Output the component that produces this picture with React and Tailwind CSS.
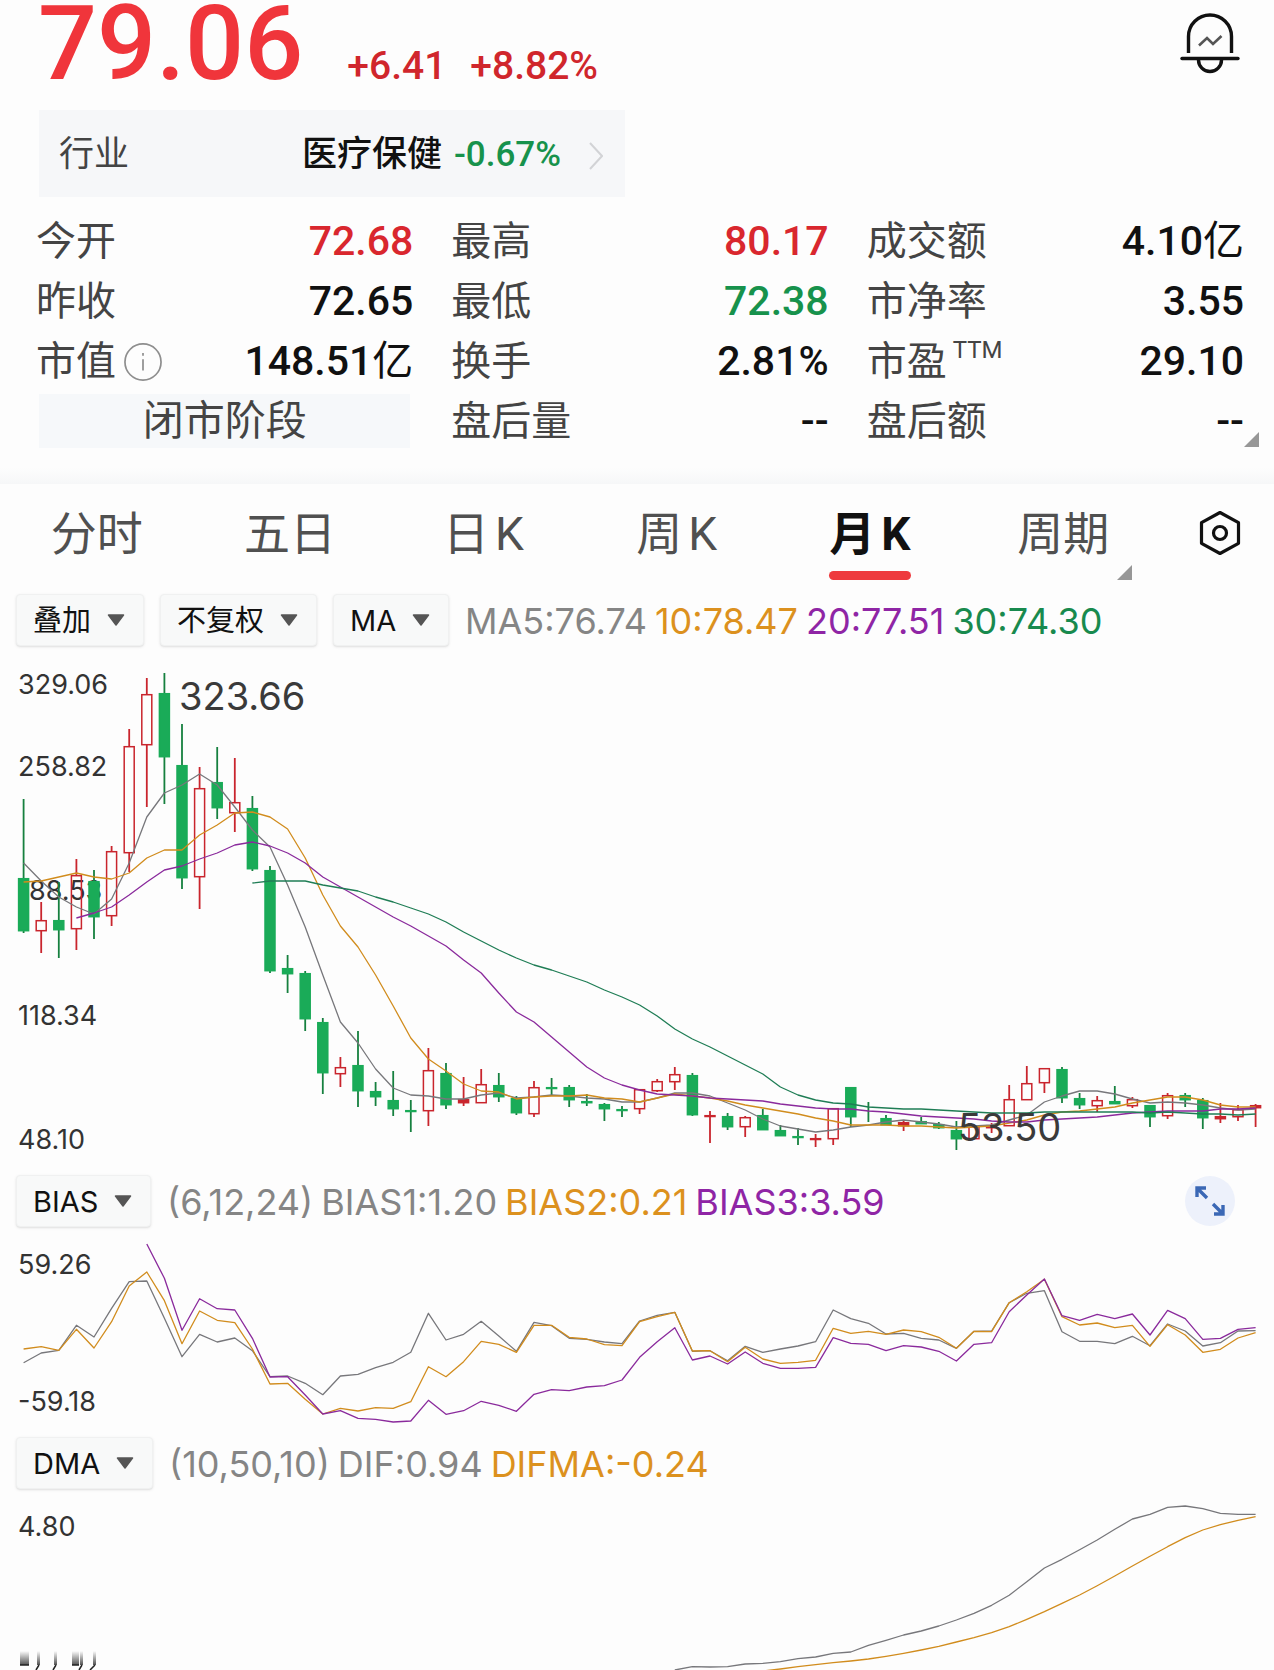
const RED = '#c9252d'
const GREEN = '#1aab58'
const GRAY = '#77777b'
const ORANGE = '#d18c1d'
const PURPLE = '#8a2a9c'
const DARK_GREEN = '#1f7d55'

const stats = [
  { label: '今开', value: '72.68', tone: 'text-[#d9272e]' },
  { label: '最高', value: '80.17', tone: 'text-[#d9272e]' },
  { label: '成交额', value: '4.10', unit: '亿', tone: 'text-[#111111]' },
  { label: '昨收', value: '72.65', tone: 'text-[#111111]' },
  { label: '最低', value: '72.38', tone: 'text-[#17924c]' },
  { label: '市净率', value: '3.55', tone: 'text-[#111111]' },
  { label: '市值', value: '148.51', unit: '亿', tone: 'text-[#111111]', info: true },
  { label: '换手', value: '2.81%', tone: 'text-[#111111]' },
  { label: '市盈', value: '29.10', tone: 'text-[#111111]', sup: 'TTM' },
]

const tabs = [
  { name: '分时' },
  { name: '五日' },
  { name: '日', suffix: 'K' },
  { name: '周', suffix: 'K' },
  { name: '月', suffix: 'K', active: true },
  { name: '周期', more: true },
]

// [high, body top, body bottom, low, up]
const candles = [
  [799, 878, 931, 933, 0], [902, 920, 931, 953, 1], [882, 920, 930, 958, 0], [859, 875, 929, 950, 1],
  [870, 881, 917, 939, 0], [846, 851, 916, 926, 1], [729, 746, 853, 872, 1], [678, 694, 745, 807, 1],
  [673, 693, 757, 804, 0], [724, 765, 878, 889, 0], [767, 788, 877, 909, 1], [747, 782, 808, 819, 0],
  [758, 802, 813, 832, 1], [796, 808, 869, 871, 0], [866, 870, 971, 973, 0], [955, 968, 974, 993, 0],
  [971, 973, 1019, 1031, 0], [1018, 1022, 1073, 1094, 0], [1057, 1067, 1074, 1087, 1], [1031, 1065, 1091, 1107, 0],
  [1082, 1091, 1097, 1106, 0], [1071, 1100, 1109, 1116, 0], [1100, 1110, 1111, 1132, 0], [1048, 1070, 1111, 1126, 1],
  [1063, 1073, 1105, 1109, 0], [1077, 1099, 1103, 1106, 1], [1069, 1084, 1103, 1103, 1], [1073, 1085, 1097, 1102, 0],
  [1096, 1098, 1113, 1115, 0], [1081, 1087, 1114, 1117, 1], [1078, 1087, 1088, 1095, 0], [1085, 1087, 1100, 1107, 0],
  [1094, 1101, 1103, 1106, 0], [1103, 1104, 1109, 1121, 0], [1106, 1109, 1110, 1117, 0], [1089, 1089, 1109, 1114, 1],
  [1079, 1081, 1091, 1092, 1], [1067, 1074, 1082, 1090, 1], [1073, 1075, 1115, 1116, 0], [1111, 1115, 1116, 1143, 1],
  [1113, 1116, 1127, 1130, 0], [1116, 1117, 1127, 1137, 1], [1109, 1115, 1130, 1130, 0], [1125, 1130, 1136, 1136, 0],
  [1128, 1136, 1137, 1145, 0], [1134, 1138, 1139, 1147, 1], [1108, 1108, 1139, 1145, 1], [1087, 1087, 1117, 1127, 0],
  [1102, 1111, 1111, 1122, 0], [1115, 1118, 1125, 1125, 0], [1120, 1122, 1126, 1131, 1], [1117, 1121, 1124, 1124, 0],
  [1122, 1124, 1128, 1129, 0], [1121, 1130, 1139, 1150, 0], [1126, 1126, 1139, 1139, 1], [1123, 1125, 1128, 1133, 1],
  [1085, 1099, 1126, 1126, 1], [1066, 1083, 1100, 1100, 1], [1068, 1068, 1083, 1093, 1], [1067, 1069, 1098, 1103, 0],
  [1093, 1098, 1105, 1109, 0], [1096, 1100, 1106, 1112, 1], [1086, 1101, 1104, 1104, 0], [1097, 1099, 1106, 1108, 1],
  [1105, 1105, 1117, 1127, 0], [1093, 1095, 1116, 1119, 1], [1093, 1095, 1100, 1107, 0], [1098, 1100, 1118, 1129, 0],
  [1103, 1116, 1119, 1123, 1], [1105, 1109, 1117, 1121, 1], [1104, 1105, 1108, 1127, 1],
]

const ma5 = [
  863, 881, 897, 907, 914, 899, 863, 817, 793, 785, 774, 785, 807, 830, 847, 885, 927, 975, 1022, 1043, 1069, 1088, 1095,
  1096, 1099, 1099, 1095, 1093, 1098, 1097, 1095, 1096, 1098, 1099, 1102, 1102, 1098, 1093, 1093, 1096, 1103, 1110, 1119,
  1126, 1129, 1132, 1130, 1127, 1125, 1122, 1120, 1122, 1124, 1127, 1126, 1125, 1120, 1115, 1102, 1096, 1091, 1091, 1094,
  1099, 1103, 1102, 1103, 1105, 1108, 1110, 1109,
]
const ma10 = [
  882, 881, 877, 873, 877, 879, 873, 858, 850, 850, 835, 825, 813, 812, 817, 829, 858, 895, 926, 947, 975, 1006, 1038,
  1059, 1071, 1084, 1091, 1092, 1099, 1097, 1096, 1096, 1095, 1098, 1099, 1102, 1098, 1094, 1096, 1098, 1101, 1105, 1108,
  1111, 1114, 1118, 1121, 1125, 1125, 1125, 1126, 1126, 1127, 1128, 1127, 1126, 1123, 1120, 1115, 1112, 1111, 1109, 1107,
  1103, 1100, 1097, 1097, 1100, 1105, 1107, 1107,
]
const ma20 = [
  918, 913, 907, 895, 882, 870, 866, 859, 853, 845, 842, 846, 853, 863, 877, 887, 897, 907, 917, 926, 936, 946, 960, 973,
  993, 1012, 1022, 1037, 1052, 1067, 1078, 1085, 1090, 1094, 1095, 1096, 1098, 1099, 1100, 1101, 1104, 1106, 1108, 1109,
  1109, 1111, 1112, 1114, 1116, 1117, 1118, 1119, 1121, 1122, 1122, 1120, 1119, 1118, 1117, 1115, 1113, 1112, 1111, 1111,
  1111, 1109, 1109, 1108,
]
const ma30 = [
  883, 881, 881, 881, 885, 888, 891, 897, 902, 908, 914, 922, 932, 941, 950, 958, 965, 970, 976, 982, 990, 997, 1005,
  1016, 1029, 1039, 1047, 1056, 1065, 1074, 1087, 1095, 1100, 1103, 1104, 1107, 1108, 1109, 1109, 1110, 1111, 1112, 1113,
  1113, 1113, 1112, 1112, 1112, 1112, 1112, 1112, 1113, 1112, 1113, 1114, 1114, 1115, 1114,
]

const bias1 = [
  398, 369, 361, 286, 321, 235, 155, 153, 265, 380, 313, 336, 324, 362, 440, 438, 460, 494, 438, 433, 413, 397, 367, 250,
  330, 313, 274, 318, 364, 277, 287, 325, 328, 336, 341, 273, 256, 247, 364, 362, 392, 349, 367, 357, 348, 335, 240, 266,
  280, 312, 310, 325, 330, 355, 304, 303, 218, 190, 182, 305, 334, 334, 341, 319, 347, 282, 303, 348, 338, 303, 302,
]
const bias2 = [
  357, 350, 361, 298, 354, 275, 168, 126, 212, 341, 243, 271, 278, 357, 462, 460, 508, 552, 535, 543, 533, 535, 515, 410,
  440, 395, 334, 343, 367, 286, 286, 322, 327, 344, 347, 275, 260, 247, 363, 362, 395, 352, 387, 400, 397, 391, 295, 310,
  304, 313, 300, 305, 322, 355, 304, 305, 218, 185, 148, 260, 285, 279, 293, 286, 349, 284, 315, 367, 358, 324, 308,
]
const bias3 = [
  42, 145, 301, 206, 236, 240, 325, 441, 440, 495, 552, 542, 565, 568, 576, 573, 511, 553, 542, 514, 526, 544, 493, 479,
  482, 471, 467, 450, 382, 335, 293, 390, 378, 402, 366, 400, 415, 415, 412, 323, 340, 343, 362, 347, 351, 364, 393, 343,
  338, 245, 195, 147, 257, 271, 253, 266, 252, 315, 241, 266, 328, 325, 298, 293,
]

const dif = [
  1320, 1310, 1311, 1310, 1302, 1300, 1295, 1286, 1281, 1270, 1266, 1246, 1231, 1215, 1203, 1188, 1170, 1150, 1126, 1096,
  1055, 1014, 988, 959, 930, 898, 867, 853, 832, 828, 836, 850, 853, 853,
]
const difma = [
  1323, 1317, 1310, 1304, 1298, 1293, 1287, 1279, 1270, 1260, 1249, 1236, 1223, 1208, 1190, 1168, 1145, 1120, 1095, 1067,
  1038, 1008, 979, 950, 923, 900, 884, 871, 860,
]

const xAt = (i) => 23.6 + i * 17.6

function Line({ data, start = 0, scale = 1, color }) {
  const points = data.map((v, i) => `${xAt(i + start).toFixed(1)},${(v * scale).toFixed(1)}`).join(' ')
  return <polyline points={points} fill="none" stroke={color} strokeWidth="1.3" strokeLinejoin="round" />
}

function Candle({ index, candle }) {
  const [high, top, bottom, low, up] = candle
  const x = xAt(index)
  const color = up ? RED : GREEN
  const flat = bottom - top < 5
  return (
    <g stroke={color}>
      <line x1={x} x2={x} y1={high} y2={top} stroke={up ? RED : '#16803f'} strokeWidth="1.8" />
      <line x1={x} x2={x} y1={bottom} y2={low} stroke={up ? RED : '#16803f'} strokeWidth="1.8" />
      {bottom > top && (
        <rect
          x={x - 5}
          y={top + 0.7}
          width="10"
          height={Math.max(bottom - top - 1, 0.8)}
          fill={up && !flat ? 'none' : color}
          strokeWidth="1.5"
        />
      )}
    </g>
  )
}

function AxisLabel({ y, children }) {
  return (
    <text x="18" y={y} fontSize="27" fill="#333333">
      {children}
    </text>
  )
}

function Picker({ name, value }) {
  return (
    <label className="relative flex h-[52px] shrink-0 items-center rounded-sm border border-[#f0f1f1] bg-[#f8f9f9] shadow-sm">
      <select
        aria-label={name}
        className="h-full appearance-none bg-transparent pt-0.5 pr-[51px] pl-4 text-[29px] text-[#111111] outline-none"
      >
        <option>{value}</option>
      </select>
      <svg className="pointer-events-none absolute right-[18px] h-3 w-[18px]" viewBox="0 0 18 12">
        <path d="M1.5 1h15L9 11z" fill="#555555" stroke="#555555" strokeWidth="1.5" strokeLinejoin="round" />
      </svg>
    </label>
  )
}

function Legend({ children }) {
  return <p className="ml-4 flex gap-2 pt-0.5 text-[36px] whitespace-nowrap">{children}</p>
}

function Corner({ className }) {
  return (
    <svg className={className} viewBox="0 0 15 15">
      <path d="M15 0v15H0z" fill="#979797" />
    </svg>
  )
}

function StatLabel({ children }) {
  return <dt className="flex items-center pt-px text-[40px] text-[#444444]">{children}</dt>
}

export default function App() {
  return (
    <main className="min-h-screen w-full bg-[#fdfdfd] font-[family-name:Roboto,'Noto_Sans_CJK_SC',sans-serif]">
      <header className="flex h-[110px] items-start justify-between pr-[34px] pl-[38px]">
        <div className="flex items-baseline font-medium text-[#d0262c]">
          <span className="text-[104px] leading-[88px] text-[#f0353b]">79.06</span>
          <span className="ml-11 text-[39px] leading-none">+6.41</span>
          <span className="ml-6 text-[39px] leading-none">+8.82%</span>
        </div>
        <button aria-label="提醒" className="mt-3">
          <svg className="h-[62px] w-[60px]" viewBox="0 0 60 62" fill="none" stroke="#111111" strokeWidth="3.4">
            <path d="M8.500 41V24.500a21.500 21.500 0 0 1 43 0V41" />
            <path d="M2 46.500h56" strokeLinecap="round" />
            <path d="M18.500 48a11.500 11.500 0 0 0 23 0" />
            <path d="M19 33.500l8-7.500 6 6 8.500-8" stroke="#555555" strokeWidth="2.600" />
          </svg>
        </button>
      </header>

      <div className="pl-[39px]">
        <a href="#industry" className="flex h-[87px] w-[586px] items-center bg-[#f6f7f9] pt-1 pr-[22px] pl-5">
          <span className="text-[35px] text-[#444444]">行业</span>
          <span className="ml-auto text-[35px] font-medium text-[#111111]">医疗保健</span>
          <span className="ml-3 text-[35px] font-medium text-[#17924c]">-0.67%</span>
          <svg className="ml-7 h-7 w-[14px]" viewBox="0 0 14 28" fill="none" stroke="#d2d3d6" strokeWidth="2">
            <path d="M1 1l12 13L1 27" />
          </svg>
        </a>
      </div>

      <dl className="relative mt-[14px] grid auto-rows-[60px] grid-cols-3 gap-x-[38px] pr-[30px] pl-9 leading-none">
        {stats.map((s) => (
          <div key={s.label} className="flex items-center justify-between">
            <StatLabel>
              {s.label}
              {s.info && (
                <svg className="ml-2 size-[38px]" viewBox="0 0 40 40" fill="none" stroke="#8e8e8e" strokeWidth="1.8">
                  <circle cx="20" cy="20" r="19" />
                  <path d="M20 17v12M20 10.500v3" />
                </svg>
              )}
              {s.sup && <sup className="ml-1.5 text-2xl leading-none">{s.sup}</sup>}
            </StatLabel>
            <dd className={`text-[41px] font-medium ${s.tone}`}>
              {s.value}
              {s.unit && <span className="font-normal">{s.unit}</span>}
            </dd>
          </div>
        ))}
        <div className="flex items-center px-[3px]">
          <dt className="flex h-[54px] w-full items-center justify-center bg-[#f6f8fa] text-[41px] text-[#444444]">
            闭市阶段
          </dt>
        </div>
        <div className="flex items-center justify-between">
          <StatLabel>盘后量</StatLabel>
          <dd className="text-[41px] font-medium text-[#111111]">--</dd>
        </div>
        <div className="flex items-center justify-between">
          <StatLabel>盘后额</StatLabel>
          <dd className="text-[41px] font-medium text-[#111111]">--</dd>
        </div>
        <Corner className="absolute right-[15px] bottom-1 size-[15px]" />
      </dl>

      <div className="mt-[17px] h-4 bg-linear-to-b from-[#fdfdfd] to-[#f6f7f8]" />

      <nav className="flex h-[110px]">
        {tabs.map((tab) => (
          <button
            key={tab.name}
            className={`relative flex flex-1 items-center justify-center gap-1.5 pb-2.5 text-[46px] ${
              tab.active ? 'font-bold text-[#111111]' : 'text-[#505050]'
            }`}
          >
            <span>{tab.name}</span>
            {tab.suffix && <span>{tab.suffix}</span>}
            {tab.active && <span className="absolute bottom-[14px] h-[9px] w-[82px] rounded-full bg-[#ee3a3e]" />}
            {tab.more && <Corner className="absolute right-7 bottom-[14px] size-[15px]" />}
          </button>
        ))}
        <button aria-label="设置" className="flex w-[114px] items-center justify-center pb-3 pl-1.5">
          <svg className="h-[46px] w-[42px]" viewBox="0 0 42 46" fill="none" stroke="#111111" strokeWidth="3.2">
            <path d="M21 2.500l18.500 10.200v20.600L21 43.500 2.500 33.300V12.700z" strokeLinejoin="round" />
            <circle cx="21" cy="23" r="6.500" />
          </svg>
        </button>
      </nav>

      <section className="font-[family-name:Inter,'Noto_Sans_CJK_SC',sans-serif]">
        <div className="flex h-[52px] items-center pl-4">
          <div className="flex gap-4">
            <Picker name="叠加" value="叠加" />
            <Picker name="复权" value="不复权" />
            <Picker name="主图指标" value="MA" />
          </div>
          <Legend>
            <span className="text-[#858585]">MA5:76.74</span>
            <span className="text-[#dc911e]">10:78.47</span>
            <span className="text-[#8f25a5]">20:77.51</span>
            <span className="text-[#188a4e]">30:74.30</span>
          </Legend>
        </div>

        <svg className="block h-auto w-full" viewBox="0 646 1274 529">
          <AxisLabel y="694">329.06</AxisLabel>
          <AxisLabel y="776">258.82</AxisLabel>
          <AxisLabel y="900">188.53</AxisLabel>
          <AxisLabel y="1025">118.34</AxisLabel>
          <AxisLabel y="1149">48.10</AxisLabel>
          {candles.map((candle, i) => (
            <Candle key={i} index={i} candle={candle} />
          ))}
          <Line data={ma5} color={GRAY} />
          <Line data={ma10} color={ORANGE} />
          <Line data={ma20} start={3} color={PURPLE} />
          <Line data={ma30} start={13} color={DARK_GREEN} />
          <text x="179" y="710" fontSize="38" fill="#3a3a3a">
            323.66
          </text>
          <text x="958" y="1141" fontSize="38" fill="#3a3a3a">
            53.50
          </text>
        </svg>

        <div className="flex h-[52px] items-center pr-[39px] pl-4">
          <Picker name="副图指标一" value="BIAS" />
          <Legend>
            <span className="text-[#858585]">(6,12,24)</span>
            <span className="text-[#858585]">BIAS1:1.20</span>
            <span className="text-[#dc911e]">BIAS2:0.21</span>
            <span className="text-[#8f25a5]">BIAS3:3.59</span>
          </Legend>
          <button
            aria-label="全屏"
            className="ml-auto flex size-[50px] items-center justify-center rounded-full bg-[#edf1fb]"
          >
            <svg className="size-8" viewBox="0 0 32 32" fill="none" stroke="#3b68b5" strokeWidth="3.4">
              <path d="M3 12V3h9M4 4l9 9M29 20v9h-9M28 28l-9-9" />
            </svg>
          </button>
        </div>

        <svg className="block h-auto w-full" viewBox="0 -3 1274 210">
          <AxisLabel y="44">59.26</AxisLabel>
          <AxisLabel y="181">-59.18</AxisLabel>
          <Line data={bias1} scale={1 / 3} color={GRAY} />
          <Line data={bias2} scale={1 / 3} color={ORANGE} />
          <Line data={bias3} start={7} scale={1 / 3} color={PURPLE} />
        </svg>

        <div className="flex h-[52px] items-center pl-4">
          <Picker name="副图指标二" value="DMA" />
          <Legend>
            <span className="text-[#858585]">(10,50,10)</span>
            <span className="text-[#858585]">DIF:0.94</span>
            <span className="text-[#dc911e]">DIFMA:-0.24</span>
          </Legend>
        </div>

        <svg className="block h-auto w-full" viewBox="0 259 1274 181">
          <defs>
            <linearGradient id="fade" x1="0" y1="0" x2="0" y2="1">
              <stop offset="0" stopColor="#333333" stopOpacity="0" />
              <stop offset="1" stopColor="#333333" stopOpacity="0.85" />
            </linearGradient>
          </defs>
          <AxisLabel y="306">4.80</AxisLabel>
          <Line data={dif} start={37} scale={1 / 3} color={GRAY} />
          <Line data={difma} start={42} scale={1 / 3} color={ORANGE} />
          {/* top edge of the next axis value, fading in */}
          <g fill="url(#fade)">
            <rect x="20" y="421" width="9" height="14" />
            <rect x="37" y="421" width="3" height="14" />
            <rect x="54" y="421" width="3" height="14" />
            <rect x="72" y="421" width="7" height="14" />
            <rect x="80" y="421" width="3" height="14" />
            <rect x="93" y="421" width="3" height="14" />
          </g>
          <path
            d="M20 435h9M39 435l-3 5M56 435l-3 5M72 435h7M82 435l-3 5M95 435l-5 5"
            stroke="#222222"
            strokeWidth="1.5"
            fill="none"
          />
        </svg>
      </section>
    </main>
  )
}
